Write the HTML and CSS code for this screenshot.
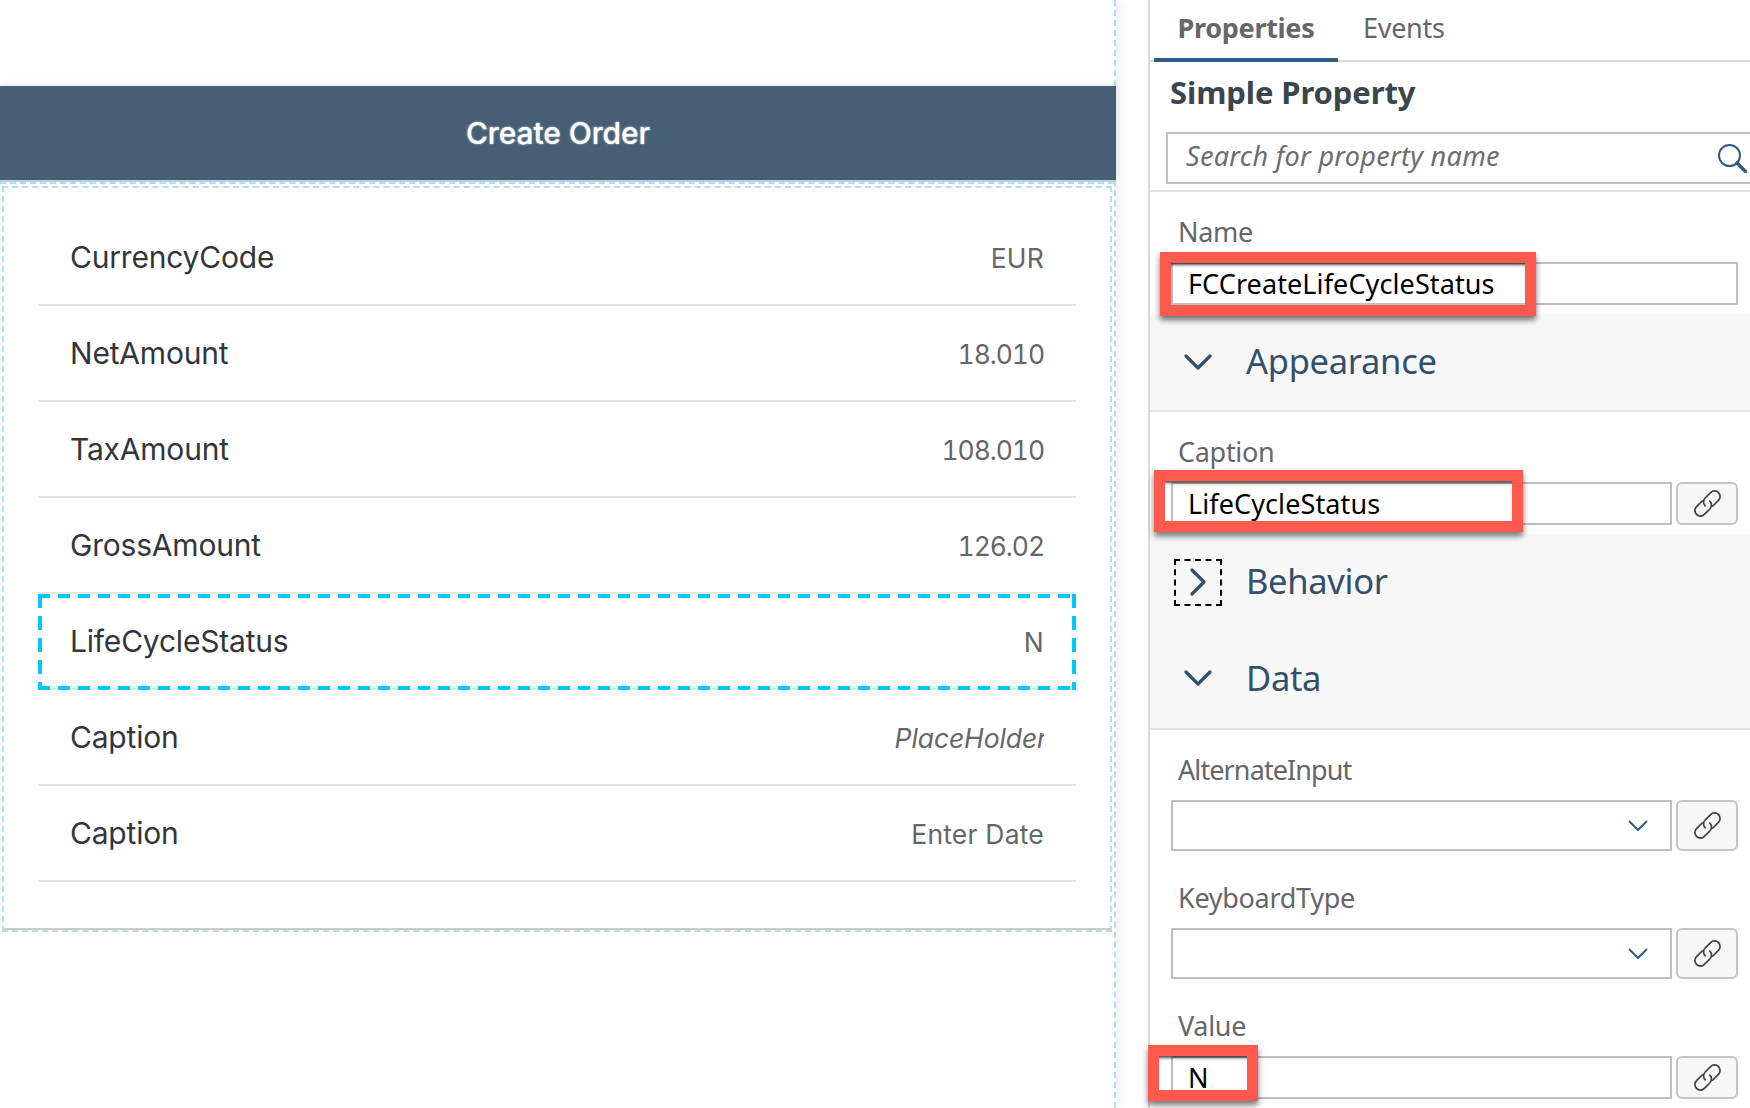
FILE: index.html
```html
<!DOCTYPE html>
<html lang="en">
<head>
<meta charset="utf-8">
<title>Create Order</title>
<link rel="stylesheet" href="styles.css">
</head>
<body>
<svg class="defs" width="0" height="0" aria-hidden="true">
  <symbol id="link" viewBox="0 0 28 28">
    <g transform="rotate(-45 14 14)" fill="none" stroke="#3a3f44" stroke-width="1.5" stroke-linecap="round">
      <path d="M12.5 9 H5 a5 5 0 0 0 0 10 H12 a5 5 0 0 0 5 -5"/>
      <path d="M15.5 19 H23 a5 5 0 0 0 0 -10 H16 a5 5 0 0 0 -5 5"/>
    </g>
  </symbol>
  <symbol id="down" viewBox="0 0 28 16"><path d="M2 2 L14 14 L26 2" fill="none" stroke="#32506b" stroke-width="3.2" stroke-linecap="round" stroke-linejoin="round"/></symbol>
  <symbol id="thin" viewBox="0 0 20 12"><path d="M1 1 L10 10 L19 1" fill="none" stroke="#2f5a7d" stroke-width="1.8" stroke-linejoin="round"/></symbol>
</svg>
<div class="layout">
  <main class="stage">
    <header class="bar">Create Order</header>
    <div class="frame">
      <section class="form">
        <div class="row"><span class="key">CurrencyCode</span><span class="val">EUR</span></div>
        <div class="row"><span class="key">NetAmount</span><span class="val num">18.010</span></div>
        <div class="row"><span class="key">TaxAmount</span><span class="val num">108.010</span></div>
        <div class="row"><span class="key">GrossAmount</span><span class="val num">126.02</span></div>
        <div class="row selected"><span class="key">LifeCycleStatus</span><span class="val">N</span></div>
        <div class="row"><span class="key">Caption</span><span class="val clip"><i>PlaceHolder</i></span></div>
        <div class="row"><span class="key">Caption</span><span class="val">Enter Date</span></div>
      </section>
    </div>
  </main>
  <aside class="panel">
    <nav class="tabs"><span class="tab active">Properties</span><span class="tab">Events</span></nav>
    <h2 class="title">Simple Property</h2>
    <div class="searchwrap">
      <div class="search">
        <span class="ph">Search for property name</span>
        <svg class="searchicon" viewBox="0 0 30 30" width="30" height="30"><circle cx="12.5" cy="12.5" r="10.5" fill="none" stroke="#2f5a7d" stroke-width="2"/><path d="M20 20 L28.5 28.5" stroke="#2f5a7d" stroke-width="3.4" stroke-linecap="round"/></svg>
      </div>
    </div>
    <div class="group">
      <label class="lab">Name</label>
      <div class="field short"><div class="input">FCCreateLifeCycleStatus</div><div class="mark mark-name"></div></div>
    </div>
    <div class="section end"><span class="chev"><svg width="28" height="16"><use href="#down"/></svg></span><span class="sec-title">Appearance</span></div>
    <div class="group">
      <label class="lab">Caption</label>
      <div class="field short"><div class="input">LifeCycleStatus</div><button class="linkbtn"><svg width="31" height="31"><use href="#link"/></svg></button><div class="mark mark-caption"></div></div>
    </div>
    <div class="section"><span class="chev focus"><svg width="16" height="28" viewBox="0 0 16 28"><path d="M2 2 L14 14 L2 26" fill="none" stroke="#32506b" stroke-width="3.2" stroke-linecap="round" stroke-linejoin="round"/></svg></span><span class="sec-title">Behavior</span></div>
    <div class="section end last"><span class="chev"><svg width="28" height="16"><use href="#down"/></svg></span><span class="sec-title">Data</span></div>
    <div class="group">
      <label class="lab tight">AlternateInput</label>
      <div class="field tall"><div class="input select"><svg width="20" height="12"><use href="#thin"/></svg></div><button class="linkbtn"><svg width="31" height="31"><use href="#link"/></svg></button></div>
    </div>
    <div class="group next first">
      <label class="lab">KeyboardType</label>
      <div class="field tall"><div class="input select"><svg width="20" height="12"><use href="#thin"/></svg></div><button class="linkbtn"><svg width="31" height="31"><use href="#link"/></svg></button></div>
    </div>
    <div class="group next">
      <label class="lab">Value</label>
      <div class="field short"><div class="input">N</div><button class="linkbtn"><svg width="31" height="31"><use href="#link"/></svg></button><div class="mark mark-value"></div></div>
    </div>
  </aside>
</div>
</body>
</html>
```

FILE: styles.css
```css
* { box-sizing: border-box; }
html, body { margin: 0; height: 100%; }
body {
  background: #fff;
  overflow: hidden;
  font-family: "Noto Sans", "Open Sans", sans-serif;
}
.defs { position: absolute; }
.layout { display: flex; height: 1108px; width: 1750px; overflow: hidden; }

/* canvas */
.stage {
  flex: 0 0 1116px;
  margin-right: 32px;
  padding-top: 86px;
  border-right: 2px dashed #b3dfe9;
  box-shadow: 6px 0 10px rgba(0,0,0,.05);
}
.bar {
  height: 96px;
  margin-right: -2px;
  background: #465f75;
  color: #fff;
  font: 500 30px/94px Inter, sans-serif;
  letter-spacing: -.1px;
  text-align: center;
  text-shadow: 0 0 2px rgba(255,255,255,.8);
  box-shadow: 0 -3px 6px rgba(0,0,0,.06);
  border-bottom: 2px solid #b7cfe0;
}
.frame {
  border-top: 2px dashed #b3dfe9;
  padding: 2px 0 0 2px;
}
.form {
  width: 1110px;
  height: 746px;
  border: 2px dashed #b3dfe9;
  padding: 22px 34px 0;
  box-shadow: inset 0 -2px 0 #ccc;
}
.row {
  height: 96px;
  display: flex;
  align-items: center;
  justify-content: space-between;
  padding: 0 32px 0 32px;
  border-bottom: 2px solid #e5e5e5;
}
.key { font: 400 30px/1 Inter, sans-serif; color: #32363a; letter-spacing: -.2px; }
.val {
  font: 400 26.5px/1 Inter, sans-serif;
  color: #666;
  letter-spacing: .2px;
  padding-top: 3px;
}
.num { font-variant-numeric: tabular-nums; letter-spacing: -1.1px; }
.clip { width: 150px; overflow: hidden; display: flex; justify-content: flex-end; white-space: nowrap; line-height: 1.3; letter-spacing: -.1px; }
.clip i { margin-right: -3px; flex: none; }
.selected {
  border-bottom: 0;
  padding-bottom: 2px;
  background:
    repeating-linear-gradient(90deg, #00c8ff 0 12px, transparent 12px 20px) top left / 100% 4px no-repeat,
    repeating-linear-gradient(90deg, #00c8ff 0 12px, transparent 12px 20px) bottom left / 100% 4px no-repeat,
    repeating-linear-gradient(180deg, #00c8ff 0 14px, transparent 14px 22px) top left / 4px 100% no-repeat,
    repeating-linear-gradient(180deg, #00c8ff 0 14px, transparent 14px 22px) top right / 4px 100% no-repeat,
    linear-gradient(#e5e5e5, #e5e5e5) bottom left / 100% 2px no-repeat;
}

/* properties panel */
.panel {
  flex: 1;
  min-width: 0;
  border-left: 2px solid #d9d9dd;
  background: #fff;
}
.tabs { height: 62px; display: flex; border-bottom: 2px solid #d9d9d9; padding-left: 4px; }
.tab { font: 400 27px/56px "Noto Sans", sans-serif; color: #666; margin-left: 25px; height: 62px; letter-spacing: -.3px; }
.tab.active {
  width: 184px;
  margin-left: 0;
  text-align: center;
  font-weight: 700;
  border-bottom: 4px solid #2f5d85;
}
.title {
  margin: 0;
  height: 70px;
  padding: 0 0 8px 20px;
  font: 700 31px/60px "Noto Sans", sans-serif;
  color: #3b454c;
  letter-spacing: -.1px;
}
.searchwrap { height: 60px; padding-left: 16px; border-bottom: 2px solid #e5e5e5; overflow: hidden; }
.search {
  width: 610px;
  height: 52px;
  border: 2px solid #bfbfbf;
  display: flex;
  align-items: center;
  padding: 0 0 5px 18px;
  position: relative;
  font: italic 400 27px/1 "Noto Sans", sans-serif;
  color: #6a6d70;
  letter-spacing: .3px;
}
.searchicon { position: absolute; left: 549px; top: 9px; }
.group { padding: 22px 12px 9px 21px; }
.group.next { padding-top: 0; margin-top: 29px; padding-bottom: 0; }
.group.next.first { margin-top: 20px; }
.lab { display: block; font: 400 27px/36px "Noto Sans", sans-serif; color: #666; margin-left: 7px; margin-bottom: 12px; letter-spacing: -.3px; }
.lab.tight { letter-spacing: -.9px; }
.field { display: flex; gap: 4px; position: relative; }
.short { height: 43px; }
.tall { height: 51px; }
.input {
  flex: 1;
  min-width: 0;
  background: #fff;
  border: 2px solid #bfbfbf;
  padding-left: 15px;
  display: flex;
  align-items: center;
  font: 400 27px/1 "Noto Sans", sans-serif;
  color: #000;
  letter-spacing: .1px;
}
.select { justify-content: flex-end; padding-right: 22px; }
.linkbtn {
  flex: 0 0 62px;
  padding: 0;
  background: #f7f7f7;
  border: 2px solid #c4c4c4;
  border-radius: 6px;
  display: flex;
  align-items: center;
  justify-content: center;
}
.section {
  height: 96px;
  background: #f7f7f7;
  display: flex;
  align-items: center;
  padding-left: 24px;
}
.section.end { height: 98px; border-bottom: 2px solid #e5e5e5; }
.section.last { height: 100px; }
.chev { width: 48px; height: 47px; display: flex; align-items: center; justify-content: center; margin-right: 24px; }
.section.last .chev { margin-top: -2px; }
.focus { border: 2px dashed #000; }
.sec-title { font: 400 34.5px/1 "Noto Sans", sans-serif; color: #32506b; letter-spacing: -.3px; padding-bottom: 1px; }

/* callouts */
.mark {
  position: absolute;
  border: 11px solid #ff5a4d;
  box-shadow: 0 4px 6px rgba(0,0,0,.55), inset 0 4px 3px -2px rgba(0,0,0,.7);
}
.mark-name { left: -11px; top: -10px; width: 376px; height: 64px; }
.mark-caption { left: -17px; top: -12px; width: 369px; height: 62px; }
.mark-value { left: -23px; top: -11px; width: 110px; height: 56px; }
```
